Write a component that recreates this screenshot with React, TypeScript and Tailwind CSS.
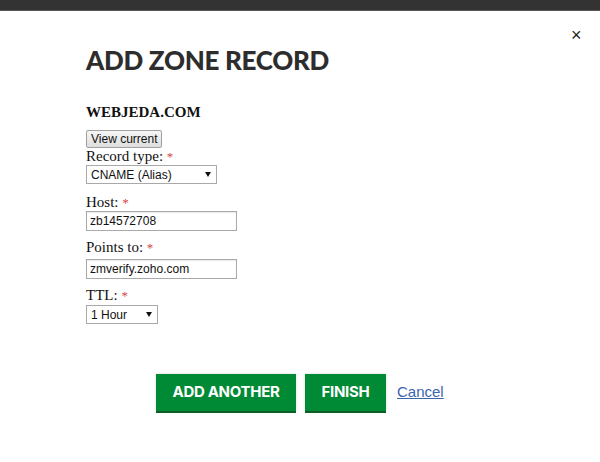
import React from "react";

const serif = { fontFamily: '"Liberation Serif", "Times New Roman", serif' };
const sans = { fontFamily: '"Liberation Sans", Arial, sans-serif' };

function Label({ children }: { children: React.ReactNode }) {
  return (
    <div className="text-[15px] leading-[17px] text-[#111]" style={serif}>
      {children}: <span className="text-[#d0464b] text-[13px]">*</span>
    </div>
  );
}

function Select({ value, width }: { value: string; width: string }) {
  return (
    <div
      className={`flex items-center justify-between border border-[#a9a9a9] bg-white pl-[4px] pr-[5px] h-[19px] text-[12px] text-[#111] ${width}`}
      style={sans}
    >
      <span>{value}</span>
      <svg width="6" height="5" viewBox="0 0 6 5"><path d="M0 0h6L3 5z" fill="#111" /></svg>
    </div>
  );
}

function Input({ value }: { value: string }) {
  return (
    <div
      className="flex items-center border border-[#a9a9a9] bg-white px-[3px] h-[20px] w-[151px] text-[12px] text-[#111] shadow-[inset_0_1px_1px_rgba(0,0,0,0.08)]"
      style={sans}
    >
      {value}
    </div>
  );
}

export default function App() {
  return (
    <div className="w-[600px] h-[462px] bg-white relative overflow-hidden">
      <div className="h-[11px] bg-[#333333] border-b border-[#5a5a5a]" />
      <button className="absolute left-[571px] top-[26px] text-[#222] text-[18px] leading-none" style={sans}>×</button>
      <div className="pl-[86px] pt-[34px]">
        <h1
          className="text-[26px] leading-[30px] text-[#2d2d2d] tracking-[-0.3px]"
          style={{ fontFamily: 'Lato, "Noto Sans", sans-serif', fontWeight: 900 }}
        >
          ADD ZONE RECORD
        </h1>
        <div className="mt-[29px] text-[15px] leading-[17px] font-bold text-[#111]" style={serif}>
          WEBJEDA.COM
        </div>
        <div className="mt-[9px] flex">
          <div
            className="flex items-center h-[18px] px-[4px] border border-[#a0a0a0] rounded-[2px] bg-gradient-to-b from-[#f6f6f6] to-[#dedede] text-[12px] text-[#111]"
            style={sans}
          >
            View current
          </div>
        </div>
        <Label>Record type</Label>
        <div className="mt-[0px]">
          <Select value="CNAME (Alias)" width="w-[131px]" />
        </div>
        <div className="mt-[10px]">
          <Label>Host</Label>
        </div>
        <div className="mt-[0px]">
          <Input value="zb14572708" />
        </div>
        <div className="mt-[8px]">
          <Label>Points to</Label>
        </div>
        <div className="mt-[3px]">
          <Input value="zmverify.zoho.com" />
        </div>
        <div className="mt-[8px]">
          <Label>TTL</Label>
        </div>
        <div className="mt-[1px]">
          <Select value="1 Hour" width="w-[72px]" />
        </div>
      </div>
      <div className="flex items-center pl-[156px] mt-[50px] gap-[9px]">
        <button
          className="h-[37px] w-[140px] bg-[#008a35] text-white text-[15px] font-bold shadow-[0_2px_0_#0b5e26,0_0_3px_rgba(0,0,0,0.15)]"
          style={{ fontFamily: 'Inter, "Noto Sans", sans-serif', letterSpacing: "-0.3px" }}
        >
          ADD ANOTHER
        </button>
        <button
          className="h-[37px] w-[81px] bg-[#008a35] text-white text-[15px] font-bold shadow-[0_2px_0_#0b5e26,0_0_3px_rgba(0,0,0,0.15)]"
          style={{ fontFamily: 'Inter, "Noto Sans", sans-serif', letterSpacing: "-0.3px" }}
        >
          FINISH
        </button>
        <a className="ml-[2px] text-[15px] text-[#3d63ad] underline" style={sans}>
          Cancel
        </a>
      </div>
    </div>
  );
}
